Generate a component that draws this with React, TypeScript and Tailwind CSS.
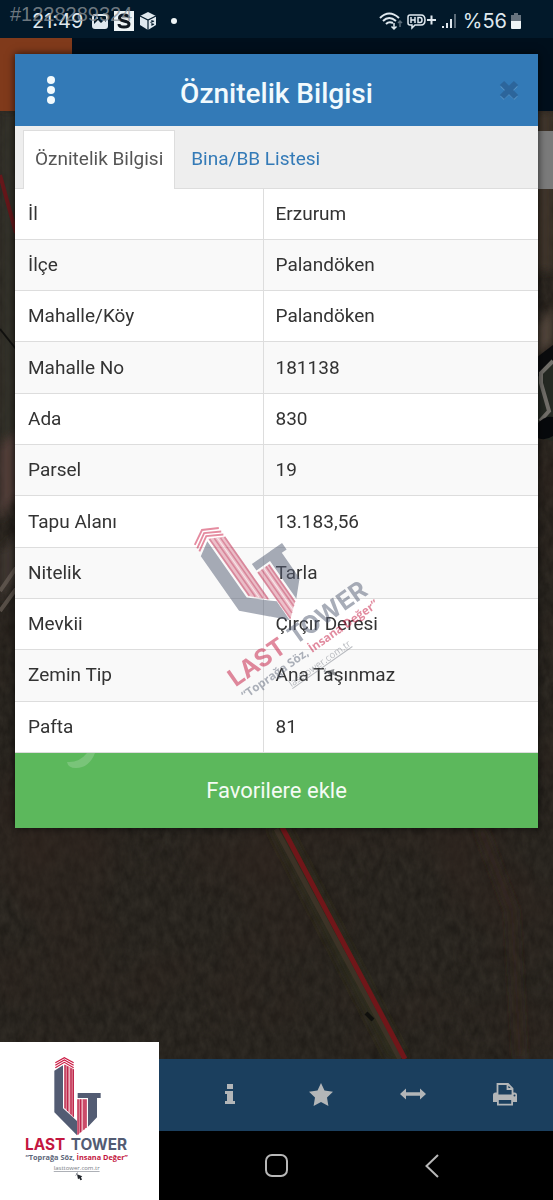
import { useState } from 'react'

// Attribute rows shown in the first tab
const rows = [
  { label: 'İl', value: 'Erzurum' },
  { label: 'İlçe', value: 'Palandöken' },
  { label: 'Mahalle/Köy', value: 'Palandöken' },
  { label: 'Mahalle No', value: '181138' },
  { label: 'Ada', value: '830' },
  { label: 'Parsel', value: '19' },
  { label: 'Tapu Alanı', value: '13.183,56' },
  { label: 'Nitelik', value: 'Tarla' },
  { label: 'Mevkii', value: 'Çırçır Deresi' },
  { label: 'Zemin Tip', value: 'Ana Taşınmaz' },
  { label: 'Pafta', value: '81' },
]

const tabs = ['Öznitelik Bilgisi', 'Bina/BB Listesi']

function TowerLogo({ className }: { className: string }) {
  return (
    <svg viewBox="0 0 495 480" className={className} role="img" aria-label="Last Tower">
      <path d="M163 92 L189 76 V205 L231 243 V286 L163 217 Z" fill="#535c73" />
      <path d="M233 159 H302 V174 H291 V232 L264 260 V174 H233 Z" fill="#535c73" />
      <path d="M193 73 L222 88 V233 L193 204 Z" fill="#dc8295" />
      <path d="M195 75 V205 M203 79 V213 M213 85 V223 M220 88 V230" stroke="#b8163f" strokeWidth="3" />
      <path d="M208 82 V218" stroke="#f6d3da" strokeWidth="2" />
      <path d="M232 178 H260 V262 L232 286 Z" fill="#dc8295" />
      <path d="M234 178 V284 M242 178 V277 M252 178 V269 M258 178 V264" stroke="#b8163f" strokeWidth="3" />
      <path d="M247 178 V273" stroke="#f6d3da" strokeWidth="2" />
      <path
        d="M166 68 L193 53 L221 68 M166 76 L193 60 L221 76 M166 83 L193 67 L221 83"
        fill="none"
        stroke="#cb1a43"
        strokeWidth="3.500"
      />
      <g className="font-['Inter',sans-serif] font-bold">
        <text x="75" y="331" fontSize="46" fill="#c4163f">LAST</text>
        <text x="212" y="331" fontSize="46" fill="#535c73">TOWER</text>
      </g>
      <text x="230" y="360" fontSize="22" textAnchor="middle" className="font-['Open_Sans',sans-serif] font-bold">
        <tspan fill="#5d6679">“Toprağa Söz, </tspan>
        <tspan fill="#c4163f">İnsana Değer”</tspan>
      </text>
      <text
        x="230"
        y="391"
        fontSize="18"
        textAnchor="middle"
        fill="#777c86"
        className="font-['Open_Sans',sans-serif] underline"
      >
        lasttower.com.tr
      </text>
      <path d="M231 403 L234 418 L238 415 L241 421 L246 419 L243 412 L247 409 Z" fill="#22262c" />
      <path d="M228 402 L234 398 M227 407 L231 401" stroke="#555b66" strokeWidth="2" />
    </svg>
  )
}

// Dimmed satellite imagery behind the dialog
function MapImagery() {
  return (
    <svg
      viewBox="0 0 553 948"
      preserveAspectRatio="none"
      className="absolute inset-0 h-full w-full"
      aria-hidden="true"
    >
      <defs>
        <filter id="soil" x="0" y="0" width="100%" height="100%" colorInterpolationFilters="sRGB">
          <feTurbulence type="fractalNoise" baseFrequency="0.14 0.08" numOctaves="4" seed="7" />
          <feColorMatrix values="0.09 0 0 0 0.113  0.085 0 0 0 0.1  0.075 0 0 0 0.083  0 0 0 0 1" />
        </filter>
        <filter id="patches" x="0" y="0" width="100%" height="100%" colorInterpolationFilters="sRGB">
          <feTurbulence type="fractalNoise" baseFrequency="0.009" numOctaves="3" seed="3" />
          <feColorMatrix values="0 0 0 0 0.2  0 0 0 0 0.145  0 0 0 0 0.12  2 0 0 0 -0.8" />
        </filter>
        <filter id="soft" x="-10%" y="-10%" width="120%" height="120%">
          <feGaussianBlur stdDeviation="4" />
        </filter>
      </defs>
      <rect width="553" height="948" filter="url(#soil)" />
      <rect width="553" height="948" filter="url(#patches)" opacity="0.5" />
      <g filter="url(#soft)">
        <path d="M0 0 H16 V330 H0 Z" fill="#33332a" opacity="0.8" />
        <path d="M0 335 L16 320 V385 L0 410 Z" fill="#52413a" />
        <path d="M0 440 L16 425 V470 L0 490 Z" fill="#403833" />
        <path d="M536 0 H553 V160 H536 Z" fill="#43362e" opacity="0.9" />
        <path d="M536 215 L553 195 V232 L536 245 Z" fill="#51443b" />
        <path d="M268 716 L388 948 H408 L288 716 Z" fill="#302c20" opacity="0.7" />
        <path d="M480 716 L512 800 L520 948" fill="none" stroke="#3a2d25" strokeWidth="10" opacity="0.5" />
      </g>
      <path d="M0 480 L16 457 M0 500 L16 478" stroke="#6b6159" strokeWidth="4" opacity="0.7" />
      <path d="M0 218 L16 238" stroke="#11110f" strokeWidth="2" />
      <path d="M536 248 L553 236 V330 L536 326 Z" fill="#252923" />
      <path d="M553 234 L536 247 V268 L553 250 Z" fill="#0b0c0e" />
      <path d="M553 250 L541 262 L541 272 L549 300 L540 310" fill="none" stroke="#716e69" strokeWidth="4" />
      <path d="M536 314 Q545 304 553 306 V325 Q544 331 536 326 Z" fill="#07090c" />
      <path d="M0 64 L16 122" stroke="#65171a" strokeWidth="4" />
      <path d="M276 718 L400 948" stroke="#43372b" strokeWidth="5" opacity="0.7" />
      <path d="M282 716 L405 948" stroke="#701619" strokeWidth="5" />
      <path d="M366 902 L373 909" stroke="#10100d" strokeWidth="4" />
    </svg>
  )
}

function StatusBar() {
  return (
    <div className="relative flex h-[38px] items-center justify-between bg-[#02192a] px-8 pt-1 font-['Inter',sans-serif] text-[20px] leading-6 text-[#dfe8ee]">
      <div className="flex items-center gap-2">
        <span>21:49</span>
        <svg viewBox="0 0 72 20" className="h-5 w-[72px]" aria-hidden="true">
          <rect x="2" y="4" width="14" height="13" rx="2" fill="none" stroke="#dfe8ee" strokeWidth="2" />
          <path d="M2 14 L7 9 L10 12 L13 9 L16 12 V17 H2 Z" fill="#dfe8ee" />
          <circle cx="6" cy="7" r="1" fill="#dfe8ee" />
          <rect x="23" y="0" width="20" height="20" fill="#eef4f6" />
          <path
            d="M37.500 7 Q37.500 4 33 4 Q28.500 4 28.500 7 Q28.500 9 33 10 Q38 11 38 13 Q38 16 33 16 Q28 16 28 13"
            fill="none"
            stroke="#101820"
            strokeWidth="3"
          />
          <path d="M57 1 L65 5 V14 L57 19 L49 14 V5 Z" fill="#dfe8ee" />
          <path d="M49 5 L57 9 L65 5 M57 9 V19" fill="none" stroke="#02192a" strokeWidth="1.200" />
          <path d="M61 9 V14 L63 13 M59.500 11.500 L63 10" fill="none" stroke="#02192a" strokeWidth="1.200" />
        </svg>
        <span className="h-[6px] w-[6px] rounded-full bg-[#eef4f6]" />
      </div>
      <div className="flex items-center gap-1">
        <svg viewBox="0 0 80 20" className="h-5 w-20" aria-hidden="true">
          <g fill="none" stroke="#dfe8ee" strokeWidth="2">
            <path d="M1 7 Q10 -2 20 7" />
            <path d="M4 10 Q10 4 17 10" />
            <path d="M7 13 Q10 10 14 12" />
            <path d="M15 12 V18 M12.500 15.500 L15 18 L17.500 15.500" strokeWidth="1.500" />
            <path d="M21 16 V10 M19 12 L21 10 L23 12" stroke="#5b6b78" strokeWidth="1.500" />
            <path d="M31 4 H42 Q46 4 46 9 Q46 14 42 14 H36 L33 17 V14 H31 Q29 14 29 12 V6 Q29 4 31 4 Z" strokeWidth="1.500" />
            <path d="M32 6 V12 M32 9 H36 M36 6 V12 M39 6.500 V11.500 H41 Q43 11.500 43 9 Q43 6.500 41 6.500 Z" strokeWidth="1.500" />
            <path d="M48 9 H57 M52.500 4.500 V13.500" />
            <path d="M64 17 V15 M68 17 V12 M72 17 V8" />
            <path d="M76 17 V3" stroke="#5b6b78" />
          </g>
        </svg>
        <span>%56</span>
        <svg viewBox="0 0 10 16" className="h-4 w-[10px]" aria-hidden="true">
          <path d="M3 0 H7 V2 H10 V8 H0 V2 H3 Z" fill="#67737e" />
          <path d="M0 8 H10 V15 Q10 16 9 16 H1 Q0 16 0 15 Z" fill="#eef4f6" />
        </svg>
      </div>
      <span className="absolute left-[10px] top-[2px] font-['Liberation_Sans',sans-serif] text-[20px] leading-6 text-[#8b9298]/80">
        #1228289324
      </span>
    </div>
  )
}

function AttributeDialog() {
  const [active, setActive] = useState(tabs[0])

  return (
    <section
      role="dialog"
      aria-label="Öznitelik Bilgisi"
      className="absolute inset-x-[15px] top-[54px] bg-white shadow-[0_0_8px_rgba(0,0,0,0.7)]"
    >
      <header className="grid h-[72px] grid-cols-[72px_1fr_72px] items-center bg-[#337ab7]">
        <button aria-label="Menü" className="flex justify-center">
          <svg viewBox="0 0 8 28" className="h-7 w-2" fill="#f2fafd">
            <circle cx="4" cy="4" r="4" />
            <circle cx="4" cy="14" r="4" />
            <circle cx="4" cy="24" r="4" />
          </svg>
        </button>
        <h1 className="pt-2 text-center text-[28px] font-medium leading-8 text-[#f2fafd]">Öznitelik Bilgisi</h1>
        <button aria-label="Kapat" className="flex justify-end pr-[18px]">
          <svg viewBox="0 0 22 22" className="h-[22px] w-[22px]" fill="none">
            <path d="M4 6 L18 19 M18 6 L4 19" stroke="#5c96c5" strokeWidth="5" />
            <path d="M4 4 L18 18 M18 4 L4 18" stroke="#2c659b" strokeWidth="6" />
          </svg>
        </button>
      </header>

      <div role="tablist" className="flex h-[63px] items-stretch border-b border-[#ddd] bg-[#eee] pl-2 pt-1">
        {tabs.map((tab) => (
          <button
            key={tab}
            role="tab"
            aria-selected={active === tab}
            onClick={() => setActive(tab)}
            className={
              active === tab
                ? '-mb-px border border-b-0 border-[#ddd] bg-white px-[11px] pb-[2px] text-[19px] text-[#555]'
                : '-mb-px border border-b-0 border-transparent px-[15px] pb-[2px] text-[19px] text-[#337ab7]'
            }
          >
            {tab}
          </button>
        ))}
      </div>

      <table className="h-[564px] w-full border-collapse text-left text-[19px] leading-6 text-[#333]">
        <tbody>
          {rows.map((row) => (
            <tr key={row.label} className="border-b border-[#ddd] even:bg-[#f9f9f9]">
              <th scope="row" className="w-[248px] border-r border-[#ddd] px-[13px] font-normal">
                {row.label}
              </th>
              <td className="px-3">{row.value}</td>
            </tr>
          ))}
        </tbody>
      </table>

      <div className="relative">
        <button className="h-[75px] w-full bg-[#5cb85c] text-center text-[22px] leading-6 text-[#f4fbf4]">
          Favorilere ekle
        </button>
        <svg viewBox="0 0 34 16" className="pointer-events-none absolute left-[50px] top-0 h-4 w-[34px]" aria-hidden="true">
          <path d="M2 9 Q14 10 22 0 H30 Q24 15 11 15 Q3 15 2 9 Z" fill="#fff" opacity="0.18" />
        </svg>
      </div>

      {/* Agency watermark across the table */}
      <div className="pointer-events-none absolute inset-x-0 top-[413px] flex justify-center pl-3">
        <TowerLogo className="w-[264px] -rotate-[35deg] opacity-50" />
      </div>
    </section>
  )
}

function Toolbar() {
  return (
    <nav className="grid h-[72px] grid-cols-6 items-center bg-[#1b3f5e] pb-[2px] pr-[2px]">
      <button aria-label="Bilgi" className="col-start-3 flex justify-center">
        <svg viewBox="0 0 10 20" className="h-5 w-[10px]" fill="#b3b6b8">
          <path d="M2 0 H8 V5 H2 Z M0 7 H8 V17 H10 V20 H0 V17 H2 V10 H0 Z" />
        </svg>
      </button>
      <button aria-label="Favoriler" className="flex justify-center">
        <svg viewBox="0 0 24 23" className="h-[23px] w-6" fill="#b3b6b8">
          <path d="M12 0 L15.500 7.500 L24 8.700 L18 14.500 L19.400 23 L12 19 L4.600 23 L6 14.500 L0 8.700 L8.500 7.500 Z" />
        </svg>
      </button>
      <button aria-label="Ölçüm" className="flex justify-center">
        <svg viewBox="0 0 26 12" className="h-3 w-[26px]" fill="#b3b6b8">
          <path d="M0 6 L6 0.500 V4.200 H20 V0.500 L26 6 L20 11.500 V7.800 H6 V11.500 Z" />
        </svg>
      </button>
      <button aria-label="Yazdır" className="flex justify-center">
        <svg viewBox="0 0 24 23" className="h-[23px] w-6" fill="none" stroke="#b3b6b8" strokeWidth="1.800">
          <path d="M4.500 12 V1 H15 L19.500 5.500 V12 M14.500 1 V6 H19.500" />
          <path
            d="M2.500 9.500 Q0 9.500 0 12 V19 H4 V22.500 H20 V19 H24 V12 Q24 9.500 21.500 9.500 H20 V11.500 H4 V9.500 Z M5.800 17 H18.200 V20.700 H5.800 Z"
            fill="#b3b6b8"
            fillRule="evenodd"
            stroke="none"
          />
          <circle cx="21.500" cy="12.500" r="1" fill="#1b3f5e" stroke="none" />
        </svg>
      </button>
    </nav>
  )
}

export default function App() {
  return (
    <main className="relative flex min-h-screen flex-col overflow-hidden bg-black font-['Roboto',sans-serif]">
      <StatusBar />
      <div className="flex h-[73px] bg-[#000f1c]">
        <div className="w-[72px] bg-[#803a1b]" />
      </div>
      <div className="relative flex-1">
        <MapImagery />
        <div className="relative ml-auto mt-5 h-[58px] w-12 bg-[#7b7b7b]" />
      </div>
      <Toolbar />
      <nav className="grid h-[69px] grid-cols-3 items-center px-[43px]">
        <button aria-label="Ana ekran" className="col-start-2 flex justify-center">
          <span className="h-[23px] w-[23px] rounded-[7px] border-2 border-[#b8b8b8]" />
        </button>
        <button aria-label="Geri" className="flex justify-center">
          <svg viewBox="0 0 14 24" className="h-6 w-[14px]" fill="none" stroke="#b8b8b8" strokeWidth="2">
            <path d="M13 1 L1.500 12 L13 23" />
          </svg>
        </button>
      </nav>

      <AttributeDialog />

      <div className="absolute bottom-0 left-0 h-[158px] w-[159px] overflow-hidden bg-white">
        <TowerLogo className="-mt-[2px] w-[165px] max-w-none" />
      </div>
    </main>
  )
}
